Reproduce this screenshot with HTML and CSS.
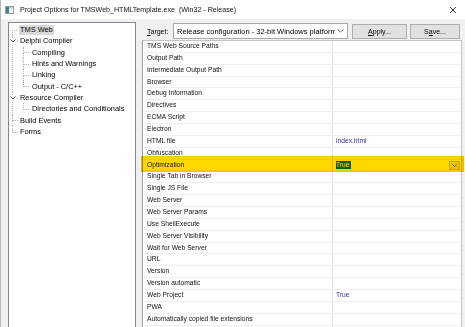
FILE: index.html
```html
<!DOCTYPE html>
<html lang="en">
<head>
  <meta charset="UTF-8">
  <title>Project Options</title>
  <link rel="stylesheet" href="styles.css">
</head>
<body>

<div class="window">

  <!-- Barra de título -->
  <div class="titlebar">
    <svg class="app-icon" width="9" height="8" viewBox="0 0 9 8">
      <rect x="0.5" y="0.5" width="8" height="7" fill="#f4f4f4" stroke="#9a9a9a"/>
      <rect x="1" y="1" width="3" height="6" fill="#3f7f8f"/>
      <rect x="4" y="1" width="4" height="1.5" fill="#c8c8c8"/>
    </svg>
    <span class="title">Project Options for TMSWeb_HTMLTemplate.exe&nbsp; (Win32 - Release)</span>
    <svg class="close" width="8" height="8" viewBox="0 0 8 8">
      <path d="M1 1 L7 7 M7 1 L1 7" stroke="#222" stroke-width="0.9"/>
    </svg>
  </div>

  <div class="content">

    <!-- Árbol de opciones -->
    <div class="tree">
      <ul class="level0">
        <li><span class="label selected">TMS Web</span></li>
        <li class="has-children">
          <span class="chevron"><svg width="6" height="4" viewBox="0 0 6 4"><path d="M0.5 0.5 L3 3 L5.5 0.5" fill="none" stroke="#333" stroke-width="0.9"/></svg></span>
          <span class="label">Delphi Compiler</span>
          <ul class="level1">
            <li><span class="label">Compiling</span></li>
            <li><span class="label">Hints and Warnings</span></li>
            <li><span class="label">Linking</span></li>
            <li><span class="label">Output - C/C++</span></li>
          </ul>
        </li>
        <li class="has-children">
          <span class="chevron"><svg width="6" height="4" viewBox="0 0 6 4"><path d="M0.5 0.5 L3 3 L5.5 0.5" fill="none" stroke="#333" stroke-width="0.9"/></svg></span>
          <span class="label">Resource Compiler</span>
          <ul class="level1">
            <li><span class="label">Directories and Conditionals</span></li>
          </ul>
        </li>
        <li><span class="label">Build Events</span></li>
        <li><span class="label">Forms</span></li>
      </ul>
    </div>

    <div class="main">
      <!-- Target y botones -->
      <div class="toolbar">
        <span class="target-label"><u>T</u>arget:</span>
        <div class="combo">
          <span class="combo-text">Release configuration - 32-bit Windows platform</span>
          <svg class="combo-arrow" width="7" height="4" viewBox="0 0 7 4"><path d="M0.5 0.5 L3.5 3 L6.5 0.5" fill="none" stroke="#555" stroke-width="0.8"/></svg>
        </div>
        <button class="btn btn-apply"><u>A</u>pply...</button>
        <button class="btn btn-save">S<u>a</u>ve...</button>
      </div>

      <!-- Grilla de propiedades -->
      <div class="grid">
        <div class="row"><div class="key">TMS Web Source Paths</div><div class="val"></div></div>
        <div class="row"><div class="key">Output Path</div><div class="val"></div></div>
        <div class="row"><div class="key">Intermediate Output Path</div><div class="val"></div></div>
        <div class="row"><div class="key">Browser</div><div class="val"></div></div>
        <div class="row"><div class="key">Debug Information</div><div class="val"></div></div>
        <div class="row"><div class="key">Directives</div><div class="val"></div></div>
        <div class="row"><div class="key">ECMA Script</div><div class="val"></div></div>
        <div class="row"><div class="key">Electron</div><div class="val"></div></div>
        <div class="row"><div class="key">HTML file</div><div class="val">index.html</div></div>
        <div class="row"><div class="key">Obfuscation</div><div class="val"></div></div>
        <div class="row row-edit">
          <div class="key">Optimization</div>
          <div class="val"><span class="sel-text">True</span>
            <span class="drop-btn"><svg width="5" height="3" viewBox="0 0 5 3"><path d="M0.5 0.5 L2.5 2.5 L4.5 0.5" fill="none" stroke="#444" stroke-width="0.8"/></svg></span>
          </div>
        </div>
        <div class="row"><div class="key">Single Tab in Browser</div><div class="val"></div></div>
        <div class="row"><div class="key">Single JS File</div><div class="val"></div></div>
        <div class="row"><div class="key">Web Server</div><div class="val"></div></div>
        <div class="row"><div class="key">Web Server Params</div><div class="val"></div></div>
        <div class="row"><div class="key">Use ShellExecute</div><div class="val"></div></div>
        <div class="row"><div class="key">Web Server Visibility</div><div class="val"></div></div>
        <div class="row"><div class="key">Wait for Web Server</div><div class="val"></div></div>
        <div class="row"><div class="key">URL</div><div class="val"></div></div>
        <div class="row"><div class="key">Version</div><div class="val"></div></div>
        <div class="row"><div class="key">Version automatic</div><div class="val"></div></div>
        <div class="row"><div class="key">Web Project</div><div class="val">True</div></div>
        <div class="row"><div class="key">PWA</div><div class="val"></div></div>
        <div class="row"><div class="key">Automatically copied file extensions</div><div class="val"></div></div>
        <div class="row"><div class="key"></div><div class="val"></div></div>
      </div>
    </div>
  </div>

  <!-- Resaltado amarillo sobre la fila Optimization -->
  <div class="highlight"></div>
</div>

</body>
</html>
```

FILE: styles.css
```css
body {
  margin: 0;
  font-family: "Liberation Sans", Arial, sans-serif;
  background: #f0f0f0;
  overflow: hidden;
}

.window {
  position: relative;
  width: 465px;
  height: 327px;
  box-sizing: border-box;
  border-left: 1px solid #b9b9b9;
  background: #f0f0f0;
  overflow: hidden;
}

.titlebar {
  height: 19px;
  background: #fff;
  display: flex;
  align-items: center;
  padding-left: 4px;
}

.app-icon {
  margin-right: 6px;
}

.title {
  font-size: 7.1px;
  color: #111;
  white-space: nowrap;
}

.close {
  margin-left: auto;
  margin-right: 8px;
}

.content {
  display: flex;
  padding: 3px 0 0 7px;
  height: 305px;
}

/* Árbol */
.tree {
  width: 128px;
  box-sizing: border-box;
  background: #fff;
  border: 1px solid #828790;
  border-bottom: none;
  padding-top: 1px;
  font-size: 7.4px;
  color: #000;
}

.tree ul {
  list-style: none;
  margin: 0;
  padding: 0;
}

.tree li {
  position: relative;
}

.tree .label {
  display: block;
  width: max-content;
  height: 11.33px;
  line-height: 11.33px;
  margin-left: 10px;
  padding: 0 1px;
  white-space: nowrap;
  position: relative;
  z-index: 1;
}

.tree .label.selected {
  background: #d9d9d9;
  height: 10px;
  line-height: 10px;
  margin-top: 0.7px;
  margin-bottom: 0.6px;
}

.tree li::before {
  content: '';
  position: absolute;
  left: 3px;
  top: 0;
  width: 5px;
  height: 5.66px;
  border-left: 1px dotted #b0b0b0;
  border-bottom: 1px dotted #b0b0b0;
}

.tree li::after {
  content: '';
  position: absolute;
  left: 3px;
  top: 5.66px;
  bottom: 0;
  border-left: 1px dotted #b0b0b0;
}

.tree li:last-child::after {
  display: none;
}

.tree .level0 > li:first-child::before {
  border-left: none;
}

.tree .level1 {
  margin-left: 11px;
}

.tree .level1 .label {
  margin-left: 11px;
}

.chevron {
  position: absolute;
  left: 0;
  top: 3px;
  width: 7px;
  height: 6px;
  background: #fff;
  display: flex;
  align-items: center;
  justify-content: center;
  z-index: 2;
}

/* Área principal */
.main {
  margin-left: 6px;
  width: 320px;
}

.toolbar {
  display: flex;
  align-items: center;
  height: 16px;
  margin-top: 1px;
  padding-left: 5px;
  font-size: 7px;
}

.target-label {
  width: 26px;
  color: #000;
}

.combo {
  width: 175px;
  height: 16px;
  box-sizing: border-box;
  background: #fff;
  border: 1px solid #a8a8a8;
  display: flex;
  align-items: center;
  padding-left: 3px;
  overflow: hidden;
}

.combo-text {
  flex: 1;
  white-space: nowrap;
  overflow: hidden;
  font-size: 7.5px;
}

.combo-arrow {
  margin: 0 3px 0 2px;
  flex-shrink: 0;
}

.btn {
  height: 15px;
  box-sizing: border-box;
  background: #e1e1e1;
  border: 1px solid #adadad;
  font-family: "Liberation Sans", Arial, sans-serif;
  font-size: 7px;
  color: #000;
  padding: 0;
}

.btn-apply {
  width: 55px;
  margin-left: 4px;
}

.btn-save {
  width: 50px;
  margin-left: 3px;
}

/* Grilla */
.grid {
  margin-top: 1px;
  border: 1px solid #c4c4c4;
  border-left-color: #a0a0a0;
  background: #fff;
  font-size: 6.7px;
  color: #111;
}

.row {
  display: flex;
  height: 11.87px;
  box-sizing: border-box;
  border-bottom: 1px solid #f0f0f0;
}

.key {
  width: 190px;
  box-sizing: border-box;
  border-right: 1px solid #dedede;
  padding-left: 4px;
  line-height: 10.87px;
  white-space: nowrap;
}

.val {
  flex: 1;
  padding-left: 3px;
  line-height: 10.87px;
  color: #3535a8;
  display: flex;
  align-items: center;
}

.sel-text {
  background: #0078d7;
  color: #fff;
  line-height: 8px;
  padding: 0 1px 0 0;
}

.drop-btn {
  margin-left: auto;
  margin-right: 1px;
  width: 11px;
  height: 9px;
  box-sizing: border-box;
  border: 1px solid #c8c8c8;
  background: #e6e6e6;
  display: flex;
  align-items: center;
  justify-content: center;
}

.highlight {
  position: absolute;
  left: 140px;
  top: 156px;
  width: 323px;
  height: 16px;
  box-sizing: border-box;
  background: #ffd800;
  border: 1px solid #f2c900;
  mix-blend-mode: multiply;
}
```
